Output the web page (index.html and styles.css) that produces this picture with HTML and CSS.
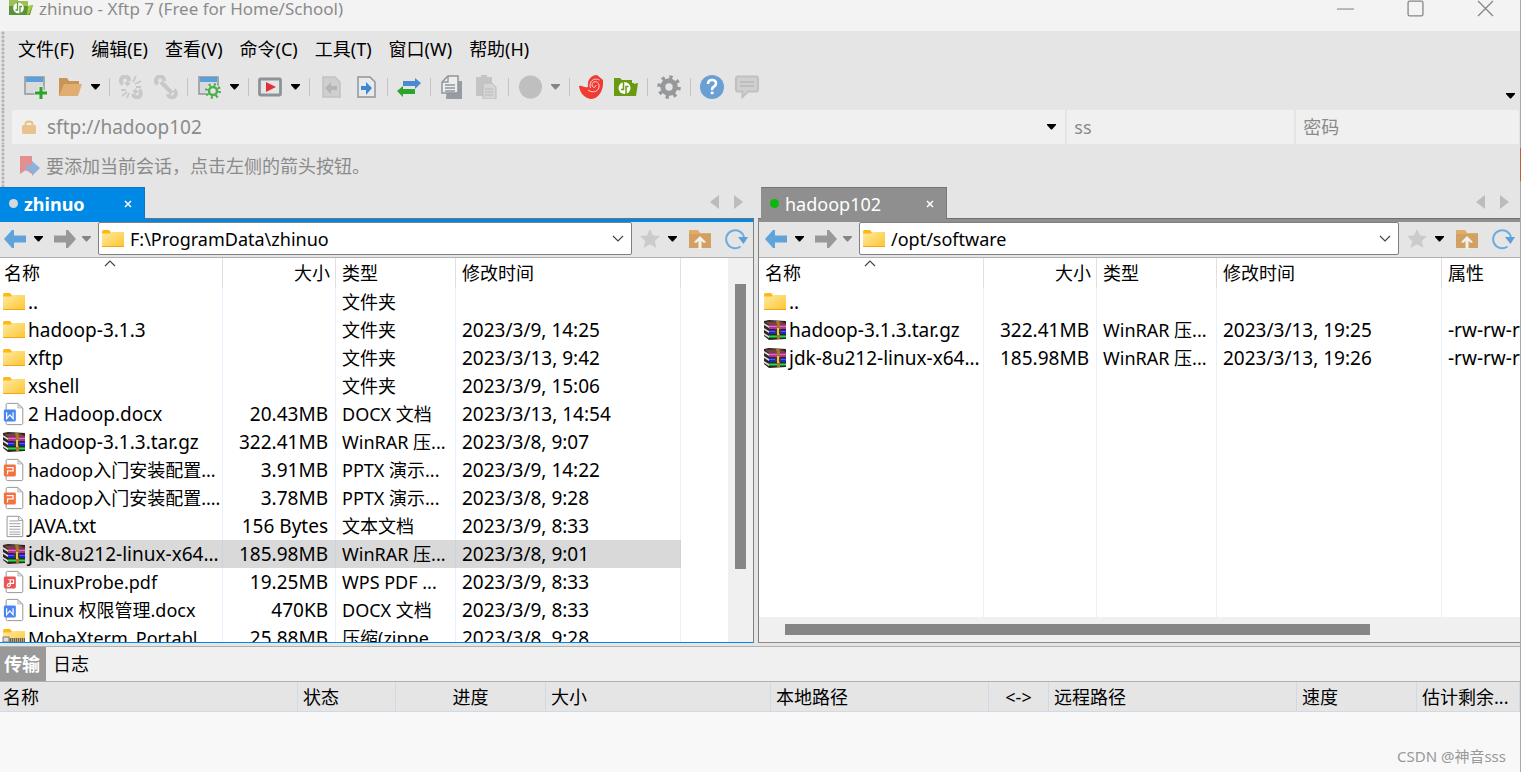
FILE: index.html
```html
<!DOCTYPE html>
<html lang="zh-CN">
<head>
<meta charset="utf-8">
<title>zhinuo - Xftp 7</title>
<link rel="stylesheet" href="styles.css">
</head>
<body>
<svg class="defs" aria-hidden="true">
  <linearGradient id="gold" x1="0" y1="0" x2="1" y2="1"><stop offset="0" stop-color="#ffe9a2"/><stop offset="1" stop-color="#fcc62f"/></linearGradient>
  <symbol id="caret" viewBox="0 0 9 6"><path d="M0 0h9v1L5 5.500H4L0 1z" fill="currentColor"/></symbol>
  <symbol id="folder" viewBox="0 0 24 20"><path d="M1 2.500Q1 1 2.500 1H8l2 2.500V8H1z" fill="#fdb813"/><path d="M1 4.500h8L11 3h12v15H1z" fill="url(#gold)"/><path d="M1 17h22v1H1z" fill="#f2a51a"/></symbol>
  <symbol id="rar" viewBox="0 0 24 20"><path d="M1 1l5-1 17 1v18l-17 1-5-4z" fill="#2e2420"/><path d="M2 2l15-1 6 3v2H7z" fill="#74433b"/><path d="M6 5h17v4H6z" fill="#b5309b"/><path d="M6 6h17v1H6z" fill="#dd70c2"/><path d="M6 10h17v4H6z" fill="#1c26c9"/><path d="M6 11h17v1H6z" fill="#4c62e5"/><path d="M6 15h17v3H6z" fill="#129133"/><path d="M6 16h17v1H6z" fill="#37d24d"/><path d="M1 3l5 3v2L1 5zm0 5l5 3v2l-5-3zm0 5l5 3v2l-5-3z" fill="#ddd"/><path d="M13 1h3l1 3v15h-3V5z" fill="#a87728"/><path d="M12 9h6v5h-6z" fill="#4b3a22"/><path d="M14 8h2v7h-2z" fill="#e4c46d"/></symbol>
  <symbol id="page" viewBox="0 0 24 26"><path d="M3.500 3Q3.500 1.500 5 1.500H16l5.500 5V23q0 1.500-1.500 1.500H5q-1.500 0-1.500-1.500z" fill="#fff" stroke="#8e8e8e"/><path d="M16 2v4.500h5z" fill="#ddd" stroke="#aaa" stroke-width=".6"/></symbol>
  <symbol id="docx" viewBox="0 0 24 26"><use href="#page"/><rect x="1" y="8" width="13" height="13" rx="1.500" fill="#4a86ee"/><path d="M4 11v7l3.500-4 3.500 4v-7" fill="none" stroke="#fff" stroke-width="1.300"/></symbol>
  <symbol id="pptx" viewBox="0 0 24 26"><use href="#page"/><rect x="1" y="7" width="13" height="13" rx="1.500" fill="#f3713d"/><path d="M4 10.500h7v3.500H5V18" fill="none" stroke="#fff" stroke-width="1.300"/></symbol>
  <symbol id="pdf" viewBox="0 0 24 26"><use href="#page"/><rect x="1" y="7" width="13" height="13" rx="1.500" fill="#eb5655"/><path d="M6 10.500h5.500v4H7m1-4v6q-1 2-3 1-1-2 2-3" fill="none" stroke="#fff" stroke-width="1.200"/></symbol>
  <symbol id="txt" viewBox="0 0 24 26"><path d="M4.500 2.500h13l4 4v18h-17z" fill="#fff" stroke="#8e8e8e"/><path d="M7 7.500h10M7 10.500h12M7 13.500h12M7 16.500h12M7 19.500h12M7 22h12" stroke="#9b9b9b"/><path d="M17 3v4h4" fill="none" stroke="#999"/></symbol>
  <symbol id="zip" viewBox="0 0 24 20"><use href="#folder"/><path d="M1 10h22v4H1z" fill="#b9a36a"/><path d="M8 12h15" stroke="#6a6659" stroke-width="4" stroke-dasharray="1 1"/><path d="M1 9h6v5H1z" fill="#ddd" stroke="#777"/></symbol>
  <symbol id="window" viewBox="0 0 24 24"><path d="M2 2h19v17H2z" fill="#d9dadb" stroke="#8f969b" stroke-width="1.500"/><path d="M3 2h17v5H3z" fill="#5b9fdb"/></symbol>
  <symbol id="back" viewBox="0 0 22 18"><path d="M0 9L8 0h2v5.500h12v7H10V18H8z" fill="currentColor"/></symbol>
  <symbol id="star" viewBox="0 0 20 20"><path d="M10 0l3 6.500 7 .6-5.200 4.800 1.700 7L10 15.300 3.500 19l1.700-7L0 7.100l7-.6z" fill="#cbcbcb"/></symbol>
  <symbol id="home" viewBox="0 0 22 20"><path d="M0 1h9l2 3h11v15H0z" fill="#e0ac6a"/><path d="M0 5h22v14H0z" fill="#d3a063"/><path d="M11 7l-6 6 2 1 2.500-2v8h3v-8l2.500 2 2-1z" fill="#f3f1ec"/></symbol>
  <symbol id="refresh" viewBox="0 0 24 22"><path d="M16.500 18.500A9 9 0 1 1 20 9.500" fill="none" stroke="#6dabe0" stroke-width="2"/><path d="M14 9h10l-4.500 7z" fill="#5c9fdb"/></symbol>
  <symbol id="gear" viewBox="0 0 24 24"><circle cx="12" cy="12" r="6.200" fill="none" stroke="currentColor" stroke-width="5"/><circle cx="12" cy="12" r="9.800" fill="none" stroke="currentColor" stroke-width="4" stroke-dasharray="3.200 4.497"/></symbol>
  <symbol id="down" viewBox="0 0 12 8"><path d="M1 1l5 5 5-5" fill="none" stroke="#444" stroke-width="1.200"/></symbol>
  <symbol id="close" viewBox="0 0 8 8"><path d="M1 1l6 6M7 1L1 7" stroke="#fff" stroke-width="1.500"/></symbol>
  <symbol id="prev" viewBox="0 0 9 14"><path d="M9 0v14L0 7z" fill="#bcbcbc"/></symbol>
  <symbol id="greenfolder" viewBox="0 0 24 20"><path d="M0 1h6l2 2h10v3h2v1l4-1-2 13H0z" fill="currentColor"/><circle cx="10.500" cy="11" r="6" fill="#fff"/><path d="M9.500 4v8.500H7M12 18V9.500h2.500" fill="none" stroke="currentColor" stroke-width="1.500"/></symbol>
</svg>

<header class="titlebar">
  <svg class="app-icon" viewBox="0 0 24 20"><path d="M0-2h7l2 3h10v5h1l4-1-3 10H0z" fill="#5b9438"/><path d="M0-2h7l2 3h10v5H0z" fill="#9cc057"/><path d="M19 6l5-1-4 9-2 1z" fill="#a8cb3d"/><circle cx="9.500" cy="8" r="5.300" fill="#fff"/><path d="M8.500 2v8H6.500M11 14V6.500h2" fill="none" stroke="#5b9438" stroke-width="1.300"/></svg>
  <span class="title">zhinuo - Xftp 7 (Free for Home/School)</span>
  <div class="win-buttons">
    <button aria-label="最小化"><svg viewBox="0 0 16 16"><path d="M0 8.500h16" stroke="#858585"/></svg></button>
    <button aria-label="最大化"><svg viewBox="0 0 16 16"><rect x="1" y="1" width="14" height="14" rx="1.500" fill="none" stroke="#858585" stroke-width="1.200"/></svg></button>
    <button aria-label="关闭"><svg viewBox="0 0 16 16"><path d="M1 1l14 14M15 1L1 15" stroke="#858585" stroke-width="1.200"/></svg></button>
  </div>
</header>

<nav class="menu grip">
  <button>文件(F)</button><button>编辑(E)</button><button>查看(V)</button><button>命令(C)</button><button>工具(T)</button><button>窗口(W)</button><button>帮助(H)</button>
</nav>

<div class="toolbar grip">
  <button class="tool" aria-label="新建"><svg viewBox="0 0 24 24"><use href="#window"/><path d="M18 11v13M11.500 17.500H24" stroke="#e5e5e5" stroke-width="5"/><path d="M18 12v12M12 18h12" stroke="#2aa52a" stroke-width="3"/></svg></button>
  <button class="tool" aria-label="打开"><svg viewBox="0 0 24 24"><path d="M1 3h8l2 3h10v4H8L3 21H1z" fill="#c99456"/><path d="M6 9h18l-4 12H1z" fill="#e0ae71"/></svg></button>
  <svg class="caret"><use href="#caret"/></svg>
  <i class="sep"></i>
  <button class="tool" aria-label="断开"><svg viewBox="0 0 24 24" fill="none" stroke="#c8c8c8"><path d="M4 9a4 4 0 1 1 6-3M20 15a4 4 0 1 1-6 4" stroke-width="4"/><path d="M7 7l3 3M15 15l3 3" stroke-width="4"/><path d="M14 7l3-6M16 9l6-3M17 12h5M2 15h5M3 21l5-4M8 23l2-5" stroke-width="1.800"/></svg></button>
  <button class="tool" aria-label="重新连接"><svg viewBox="0 0 24 24" fill="none" stroke="#c8c8c8" stroke-width="4"><path d="M4 9a4 4 0 1 1 6-3M20 15a4 4 0 1 1-6 4M7 7l11 11"/></svg></button>
  <i class="sep"></i>
  <button class="tool" aria-label="属性"><svg viewBox="0 0 24 24"><use href="#window"/><circle cx="16" cy="16" r="7" fill="#e5e5e5"/><circle cx="16" cy="16" r="4" fill="none" stroke="#4eb04a" stroke-width="2.500"/><circle cx="16" cy="16" r="6.500" fill="none" stroke="#4eb04a" stroke-width="3" stroke-dasharray="2 3.105"/></svg></button>
  <svg class="caret"><use href="#caret"/></svg>
  <i class="sep"></i>
  <button class="tool" aria-label="运行"><svg viewBox="0 0 24 24"><rect x="1.500" y="4" width="21" height="16" rx="1" fill="#e4e7e8" stroke="#8d9398" stroke-width="2.800"/><path d="M8 7l10 5-10 5z" fill="#e62e36"/></svg></button>
  <svg class="caret"><use href="#caret"/></svg>
  <i class="sep"></i>
  <button class="tool" aria-label="向左传输"><svg viewBox="0 0 24 24"><path d="M4 2h12l5 5v15H4z" fill="#cfcfcf" stroke="#c2c2c2" stroke-width="1.500"/><path d="M6 13l6-6v4h6v4h-6v4z" fill="#b5b5b5"/></svg></button>
  <button class="tool" aria-label="向右传输"><svg viewBox="0 0 24 24"><path d="M4 2h12l5 5v15H4z" fill="#e8eaeb" stroke="#8e959a" stroke-width="1.500"/><path d="M18 13l-6-6v4H7v4h5v5z" fill="#3f87d3"/></svg></button>
  <i class="sep"></i>
  <button class="tool" aria-label="同步"><svg viewBox="0 0 24 24"><path d="M24 8l-6-5v3H6v5h12v3z" fill="#4a8ad0"/><path d="M0 16l6-5v3h12v5H6v3z" fill="#2ba52b"/></svg></button>
  <i class="sep"></i>
  <button class="tool" aria-label="复制"><svg viewBox="0 0 24 24"><path d="M7 6h15v18H6z" fill="#969ca2"/><path d="M8 1h10v17H2V7z" fill="#eceded" stroke="#8e959a" stroke-width="1.500"/><path d="M2 7h6V1M5 10h10M5 13h10M5 16h10" fill="none" stroke="#8e959a" stroke-width="1.300"/></svg></button>
  <button class="tool" aria-label="粘贴"><svg viewBox="0 0 24 24"><path d="M1 2h5V0h6v2h5v19H1z" fill="#c4c4c4"/><path d="M8 8h9l4 4v12H8z" fill="#d5d5d5" stroke="#bdbdbd"/><path d="M10 14h8M10 17h8M10 20h8" stroke="#bbb"/></svg></button>
  <i class="sep"></i>
  <button class="tool" aria-label="停止"><svg viewBox="0 0 24 24"><circle cx="12.500" cy="12" r="11.500" fill="#bfbfbf"/></svg></button>
  <svg class="caret dim"><use href="#caret"/></svg>
  <i class="sep"></i>
  <button class="tool" aria-label="Xshell"><svg viewBox="0 0 24 24"><path d="M0 11c3-1 5 2 9 1C8 4 13 0 18 0l6 5c1 11-5 19-12 19C5 23 1 18 0 11z" fill="#f03a32"/><path d="M9 15c5 4 12 1 11-5-1-5-7-4-7 0 0 3 4 3 4 0M11.500 13c-2-6 3-11 9-8" fill="none" stroke="#f0d5d3" stroke-width="1"/></svg></button>
  <button class="tool green" aria-label="Xftp"><svg viewBox="0 -2 24 24"><use href="#greenfolder" width="24" height="20"/></svg></button>
  <i class="sep"></i>
  <button class="tool gear" aria-label="选项"><svg viewBox="0 0 24 24"><use href="#gear"/></svg></button>
  <i class="sep"></i>
  <button class="tool" aria-label="帮助"><svg viewBox="0 0 24 24"><circle cx="12" cy="12" r="12" fill="#6a9fd4"/><path d="M8 9q0-4 4-4t4 3.500q0 2-2 3t-2 3.500" fill="none" stroke="#fff" stroke-width="2.600"/><path d="M10.700 16.500h2.800v2.700h-2.800z" fill="#fff"/></svg></button>
  <button class="tool" aria-label="反馈"><svg viewBox="0 0 24 24"><path d="M3 1.500h18q2 0 2 2v11q0 2-2 2h-8L7.500 22v-5.500H3q-2 0-2-2v-11q0-2 2-2z" fill="#d0d0d0" stroke="#c0c0c0" stroke-width="2"/><path d="M5 7h14M5 11h14" stroke="#b7b7b7" stroke-width="1.500"/></svg></button>
  <svg class="caret overflow"><use href="#caret"/></svg>
</div>

<form class="address grip">
  <div class="field host">
    <svg class="lock" viewBox="0 0 14 14"><path d="M3.500 6V4q0-2.500 3.500-2.500T10.500 4v2" fill="none" stroke="#e7bf87" stroke-width="2"/><rect y="5" width="14" height="9" rx="1.500" fill="#e9c28d"/></svg>
    <input type="text" value="sftp://hadoop102" aria-label="主机">
    <svg class="caret"><use href="#caret"/></svg>
  </div>
  <div class="field"><input type="text" value="ss" aria-label="用户名"></div>
  <div class="field"><input type="text" placeholder="密码" aria-label="密码"></div>
</form>

<div class="hint grip">
  <svg class="flag" viewBox="0 0 20 20"><path d="M0 0h12v18l-6-4-6 4z" fill="#e38f91"/><path d="M20 12l-8-7v4H6v6h6v5z" fill="#8db1d9"/></svg>
  <span>要添加当前会话，点击左侧的箭头按钮。</span>
</div>

<main class="panes">
  <section class="pane local">
    <div class="tabs">
      <div class="tab"><i class="dot"></i><span>zhinuo</span><button aria-label="关闭"><svg><use href="#close"/></svg></button></div>
      <div class="tab-nav"><svg><use href="#prev"/></svg><svg class="flip"><use href="#prev"/></svg></div>
    </div>
    <div class="frame">
      <div class="nav">
        <svg class="arrow blue"><use href="#back"/></svg><svg class="caret"><use href="#caret"/></svg>
        <svg class="arrow flip"><use href="#back"/></svg><svg class="caret dim"><use href="#caret"/></svg>
        <div class="path"><svg class="file"><use href="#folder"/></svg><input type="text" value="F:\ProgramData\zhinuo" aria-label="本地路径"><svg class="chev"><use href="#down"/></svg></div>
        <svg class="star"><use href="#star"/></svg><svg class="caret"><use href="#caret"/></svg>
        <svg class="home"><use href="#home"/></svg><svg class="refresh"><use href="#refresh"/></svg>
      </div>
      <div class="list">
        <div class="scroll">
        <table>
          <colgroup><col class="c-name"><col class="c-size"><col class="c-type"><col class="c-time"><col></colgroup>
          <thead><tr><th>名称<svg class="sort"><use href="#down"/></svg></th><th class="num">大小</th><th>类型</th><th>修改时间</th><th></th></tr></thead>
          <tbody>
            <tr><td><svg class="file"><use href="#folder"/></svg>..</td><td></td><td class="type">文件夹</td><td></td><td></td></tr>
            <tr><td><svg class="file"><use href="#folder"/></svg>hadoop-3.1.3</td><td></td><td class="type">文件夹</td><td>2023/3/9, 14:25</td><td></td></tr>
            <tr><td><svg class="file"><use href="#folder"/></svg>xftp</td><td></td><td class="type">文件夹</td><td>2023/3/13, 9:42</td><td></td></tr>
            <tr><td><svg class="file"><use href="#folder"/></svg>xshell</td><td></td><td class="type">文件夹</td><td>2023/3/9, 15:06</td><td></td></tr>
            <tr><td><svg class="file"><use href="#docx"/></svg>2 Hadoop.docx</td><td class="num">20.43MB</td><td class="type">DOCX 文档</td><td>2023/3/13, 14:54</td><td></td></tr>
            <tr><td><svg class="file"><use href="#rar"/></svg>hadoop-3.1.3.tar.gz</td><td class="num">322.41MB</td><td class="type">WinRAR 压...</td><td>2023/3/8, 9:07</td><td></td></tr>
            <tr><td class="zh"><svg class="file"><use href="#pptx"/></svg>hadoop入门安装配置...</td><td class="num">3.91MB</td><td class="type">PPTX 演示...</td><td>2023/3/9, 14:22</td><td></td></tr>
            <tr><td class="zh"><svg class="file"><use href="#pptx"/></svg>hadoop入门安装配置....</td><td class="num">3.78MB</td><td class="type">PPTX 演示...</td><td>2023/3/8, 9:28</td><td></td></tr>
            <tr><td><svg class="file"><use href="#txt"/></svg>JAVA.txt</td><td class="num">156 Bytes</td><td class="type">文本文档</td><td>2023/3/9, 8:33</td><td></td></tr>
            <tr class="selected"><td><svg class="file"><use href="#rar"/></svg>jdk-8u212-linux-x64...</td><td class="num">185.98MB</td><td class="type">WinRAR 压...</td><td>2023/3/8, 9:01</td><td></td></tr>
            <tr><td class="zh"><svg class="file"><use href="#pdf"/></svg>LinuxProbe.pdf</td><td class="num">19.25MB</td><td class="type">WPS PDF ...</td><td>2023/3/9, 8:33</td><td></td></tr>
            <tr><td class="zh"><svg class="file"><use href="#docx"/></svg>Linux 权限管理.docx</td><td class="num">470KB</td><td class="type">DOCX 文档</td><td>2023/3/9, 8:33</td><td></td></tr>
            <tr><td class="zh"><svg class="file"><use href="#zip"/></svg>MobaXterm_Portabl...</td><td class="num">25.88MB</td><td class="type">压缩(zippe...</td><td>2023/3/8, 9:28</td><td></td></tr>
          </tbody>
        </table>
        </div>
        <div class="vbar"><i></i></div>
      </div>
    </div>
  </section>

  <section class="pane remote">
    <div class="tabs">
      <div class="tab"><i class="dot"></i><span>hadoop102</span><button aria-label="关闭"><svg><use href="#close"/></svg></button></div>
      <div class="tab-nav"><svg><use href="#prev"/></svg><svg class="flip"><use href="#prev"/></svg></div>
    </div>
    <div class="frame">
      <div class="nav">
        <svg class="arrow blue"><use href="#back"/></svg><svg class="caret"><use href="#caret"/></svg>
        <svg class="arrow flip"><use href="#back"/></svg><svg class="caret dim"><use href="#caret"/></svg>
        <div class="path"><svg class="file"><use href="#folder"/></svg><input type="text" value="/opt/software" aria-label="远程路径"><svg class="chev"><use href="#down"/></svg></div>
        <svg class="star"><use href="#star"/></svg><svg class="caret"><use href="#caret"/></svg>
        <svg class="home"><use href="#home"/></svg><svg class="refresh"><use href="#refresh"/></svg>
      </div>
      <div class="list column">
        <div class="scroll">
        <table>
          <colgroup><col class="c-name"><col class="c-size"><col class="c-type"><col class="c-time"><col></colgroup>
          <thead><tr><th>名称<svg class="sort"><use href="#down"/></svg></th><th class="num">大小</th><th>类型</th><th>修改时间</th><th>属性</th></tr></thead>
          <tbody>
            <tr><td><svg class="file"><use href="#folder"/></svg>..</td><td></td><td></td><td></td><td></td></tr>
            <tr><td><svg class="file"><use href="#rar"/></svg>hadoop-3.1.3.tar.gz</td><td class="num">322.41MB</td><td class="type">WinRAR 压...</td><td>2023/3/13, 19:25</td><td>-rw-rw-r--</td></tr>
            <tr><td><svg class="file"><use href="#rar"/></svg>jdk-8u212-linux-x64...</td><td class="num">185.98MB</td><td class="type">WinRAR 压...</td><td>2023/3/13, 19:26</td><td>-rw-rw-r--</td></tr>
            <tr class="fill"><td></td><td></td><td></td><td></td><td></td></tr>
          </tbody>
        </table>
        </div>
        <div class="hbar"><i></i></div>
      </div>
    </div>
  </section>
</main>

<section class="transfer">
  <div class="transfer-tabs"><button class="active">传输</button><button>日志</button></div>
  <table class="queue">
    <colgroup><col class="q-name"><col class="q-state"><col class="q-prog"><col class="q-size"><col class="q-local"><col class="q-dir"><col class="q-remote"><col class="q-speed"><col></colgroup>
    <thead><tr><th>名称</th><th>状态</th><th class="mid">进度</th><th>大小</th><th>本地路径</th><th class="mid">&lt;-&gt;</th><th>远程路径</th><th>速度</th><th>估计剩余...</th></tr></thead>
  </table>
  <p class="watermark">CSDN @神音sss</p>
</section>
<i class="edge-mark"></i>
</body>
</html>
```
FILE: styles.css
```css
* { box-sizing: border-box; }
body {
  margin: 0;
  height: 100vh;
  display: flex;
  flex-direction: column;
  overflow: hidden;
  background: #e5e5e5;
  border-right: 1px solid #a9a9a9;
  color: #000;
  font: 18px/28px "Noto Sans", "Noto Sans CJK SC", sans-serif;
}
button, input { font: inherit; color: inherit; }
button { border: 0; padding: 0; background: none; }
input { border: 0; padding: 0; background: none; outline: 0; min-width: 0; flex: 1; }
svg { display: block; flex: none; }
.defs { position: absolute; width: 0; height: 0; }
.flip { transform: scaleX(-1); }
.caret { width: 9px; height: 6px; color: #000; }
.caret.dim { color: #858585; }

.titlebar { flex: none; height: 31px; display: flex; align-items: flex-start; padding: 0 26px 0 9px; background: #f3f3f3; color: #8b8b8b; }
.app-icon { width: 24px; height: 20px; margin-right: 6px; }
.title { font-size: 17px; line-height: 18px; }
.win-buttons { margin-left: auto; display: flex; gap: 53px; }
.win-buttons svg { width: 17px; height: 17px; }

.grip {
  flex: none;
  background: radial-gradient(circle, #b4b4b4 1px, transparent 2px) 1px 0 / 4px 4px repeat-y;
}
.menu { height: 36px; display: flex; gap: 17px; padding-left: 18px; }
.toolbar { height: 43px; display: flex; align-items: center; gap: 9px; padding: 0 5px 4px 23px; }
.tool { width: 24px; height: 24px; }
.tool svg { width: 24px; height: 24px; }
.tool + .tool { margin-left: 2px; }
.tool.green { color: #6a9a12; }
.tool.gear { color: #96989a; }
.sep { width: 1px; height: 18px; background: #c4c4c4; }
.overflow { margin-left: auto; align-self: flex-end; margin-bottom: 7px; }

.address { height: 34px; display: grid; grid-template-columns: minmax(0, 1054fr) minmax(0, 227fr) minmax(0, 223fr); gap: 2px; padding: 0 1px 0 12px; color: #8b8b8b; }
.field { display: flex; align-items: center; padding: 0 7px; background-color: #f0f0f0; }
.field input::placeholder { color: #8b8b8b; opacity: 1; }
.host { padding: 0 9px 0 10px; font-size: 19px; }
.lock { width: 14px; height: 14px; margin-right: 11px; }
.hint { height: 43px; display: flex; align-items: center; gap: 6px; padding: 0 0 0 20px; color: #8b8b8b; }
.flag { width: 20px; height: 20px; }

.panes { flex: 1; min-height: 0; display: grid; grid-template-columns: 754fr 762fr; gap: 4px; }
.pane { min-width: 0; min-height: 0; display: flex; flex-direction: column; --accent: #0089e4; }
.remote { --accent: #8f8f8f; }
.tabs { flex: none; height: 32px; display: flex; justify-content: space-between; border-bottom: 1px solid #707070; }
.tab { width: 145px; height: 32px; display: flex; align-items: center; padding: 0 12px 0 9px; background: var(--accent); border: 1px solid #0878c4; border-bottom: 0; border-left: 0; color: #fff; font-weight: 700; }
.tab span { margin-left: 6px; }
.tab button { margin-left: auto; }
.tab svg { width: 8px; height: 8px; }
.dot { width: 9px; height: 9px; border-radius: 50%; background: #d5d9dc; }
.remote .tab { width: 186px; margin-left: 3px; border-color: #777; font-weight: 400; }
.remote .dot { background: #0bb80b; }
.tab-nav { display: flex; align-items: center; gap: 15px; padding: 0 11px 2px 0; }
.tab-nav svg { width: 9px; height: 14px; }
.frame { flex: 1; min-height: 0; display: flex; flex-direction: column; border-top: 3px solid var(--accent); border-right: 1px solid #808080; border-bottom: 1px solid var(--accent); }
.remote .frame { border-left: 1px solid #808080; border-right: 0; }
.nav { flex: none; height: 36px; display: flex; align-items: center; padding: 0 5px 2px 4px; border-bottom: 1px solid #b0b0b0; }
.remote .nav { padding-left: 6px; }
.arrow { width: 22px; height: 18px; color: #989898; margin-right: 8px; }
.arrow.blue { color: #5fa3dc; }
.arrow.flip { margin-left: 11px; margin-right: 6px; }
.path { flex: 1; min-width: 0; height: 33px; display: flex; align-items: center; margin: 0 8px 0 7px; padding: 0 7px 0 2px; background: #fff; border: 1px solid #808080; border-radius: 2px; }
.path input { margin-left: 5px; }
.chev { width: 12px; height: 8px; }
.star { width: 20px; height: 20px; margin-right: 8px; }
.home { width: 22px; height: 20px; margin: 0 13px 0 12px; }
.refresh { width: 24px; height: 22px; }

.list { flex: 1; min-height: 0; display: flex; background: #fff; }
.list.column { flex-direction: column; }
.scroll { flex: 1; min-width: 0; min-height: 0; overflow: hidden; }
table { width: 100%; table-layout: fixed; border-collapse: separate; border-spacing: 0; }
.column table { height: 100%; }
.c-name { width: 223px; }
.remote .c-name { width: 225px; }
.c-size { width: 113px; }
.c-type { width: 120px; }
.c-time { width: 225px; }
th, td { height: 28px; padding: 0 6px; overflow: hidden; white-space: nowrap; text-align: left; font-weight: 400; line-height: 28px; border-right: 1px solid #e8f0fb; }
th { position: relative; height: 30px; border-color: #e0e0e0; }
th:first-child { padding-left: 4px; }
td { font-size: 19px; }
td:first-child { padding: 0 0 0 2px; }
.remote th:first-child { padding-left: 6px; }
.remote td:first-child { padding-left: 4px; }
td.type, td.zh { font-size: 18px; }
th:last-child, td:last-child { border-right: 0; }
.num { text-align: right; }
td.num { padding-right: 7px; }
th.num { padding-right: 5px; }
.sort { position: absolute; left: 50%; top: 1px; width: 12px; height: 8px; margin-left: -7px; transform: scaleY(-1); }
.fill td { height: auto; }
.file { width: 24px; height: 24px; }
td .file { float: left; margin: 2px 2px 0 0; }
.selected td { background: #d9d9d9; border-color: #ccd3dc; }
.selected td:last-child { background: #fff; }
.vbar { width: 25px; background: #f0f0f0; padding: 26px 7px 0; }
.vbar i { display: block; height: 285px; background: #868686; }
.hbar { height: 25px; background: #f0f0f0; padding: 7px 150px 7px 26px; }
.hbar i { display: block; height: 11px; background: #868686; }

.transfer { flex: none; height: 126px; margin-top: 3px; display: flex; flex-direction: column; background: #f8f8f8; border-top: 1px solid #b0b0b0; }
.transfer-tabs { display: flex; height: 35px; background: #f0f0f0; border-bottom: 1px solid #b0b0b0; }
.transfer-tabs button { padding: 0 7px; }
.transfer-tabs .active { width: 46px; padding: 0 2px 0 0; background: #999; color: #fff; font-weight: 700; }
.queue th { background: #e5e5e5; border-right: 1px solid #d0d9e6; border-bottom: 1px solid #d0d9e6; padding: 0 5px; }
.queue th:first-child { padding-left: 3px; }
.queue .mid { text-align: center; }
.q-name { width: 298px; }
.q-state { width: 98px; }
.q-prog { width: 150px; }
.q-size { width: 225px; }
.q-local { width: 218px; }
.q-dir { width: 60px; }
.q-remote { width: 248px; }
.q-speed { width: 120px; }
.watermark { margin: auto 14px 4px auto; font-size: 15px; line-height: 24px; color: #999; }
.edge-mark { position: absolute; right: 0; top: 148px; width: 1px; height: 33px; background: #c8593c; }
```
